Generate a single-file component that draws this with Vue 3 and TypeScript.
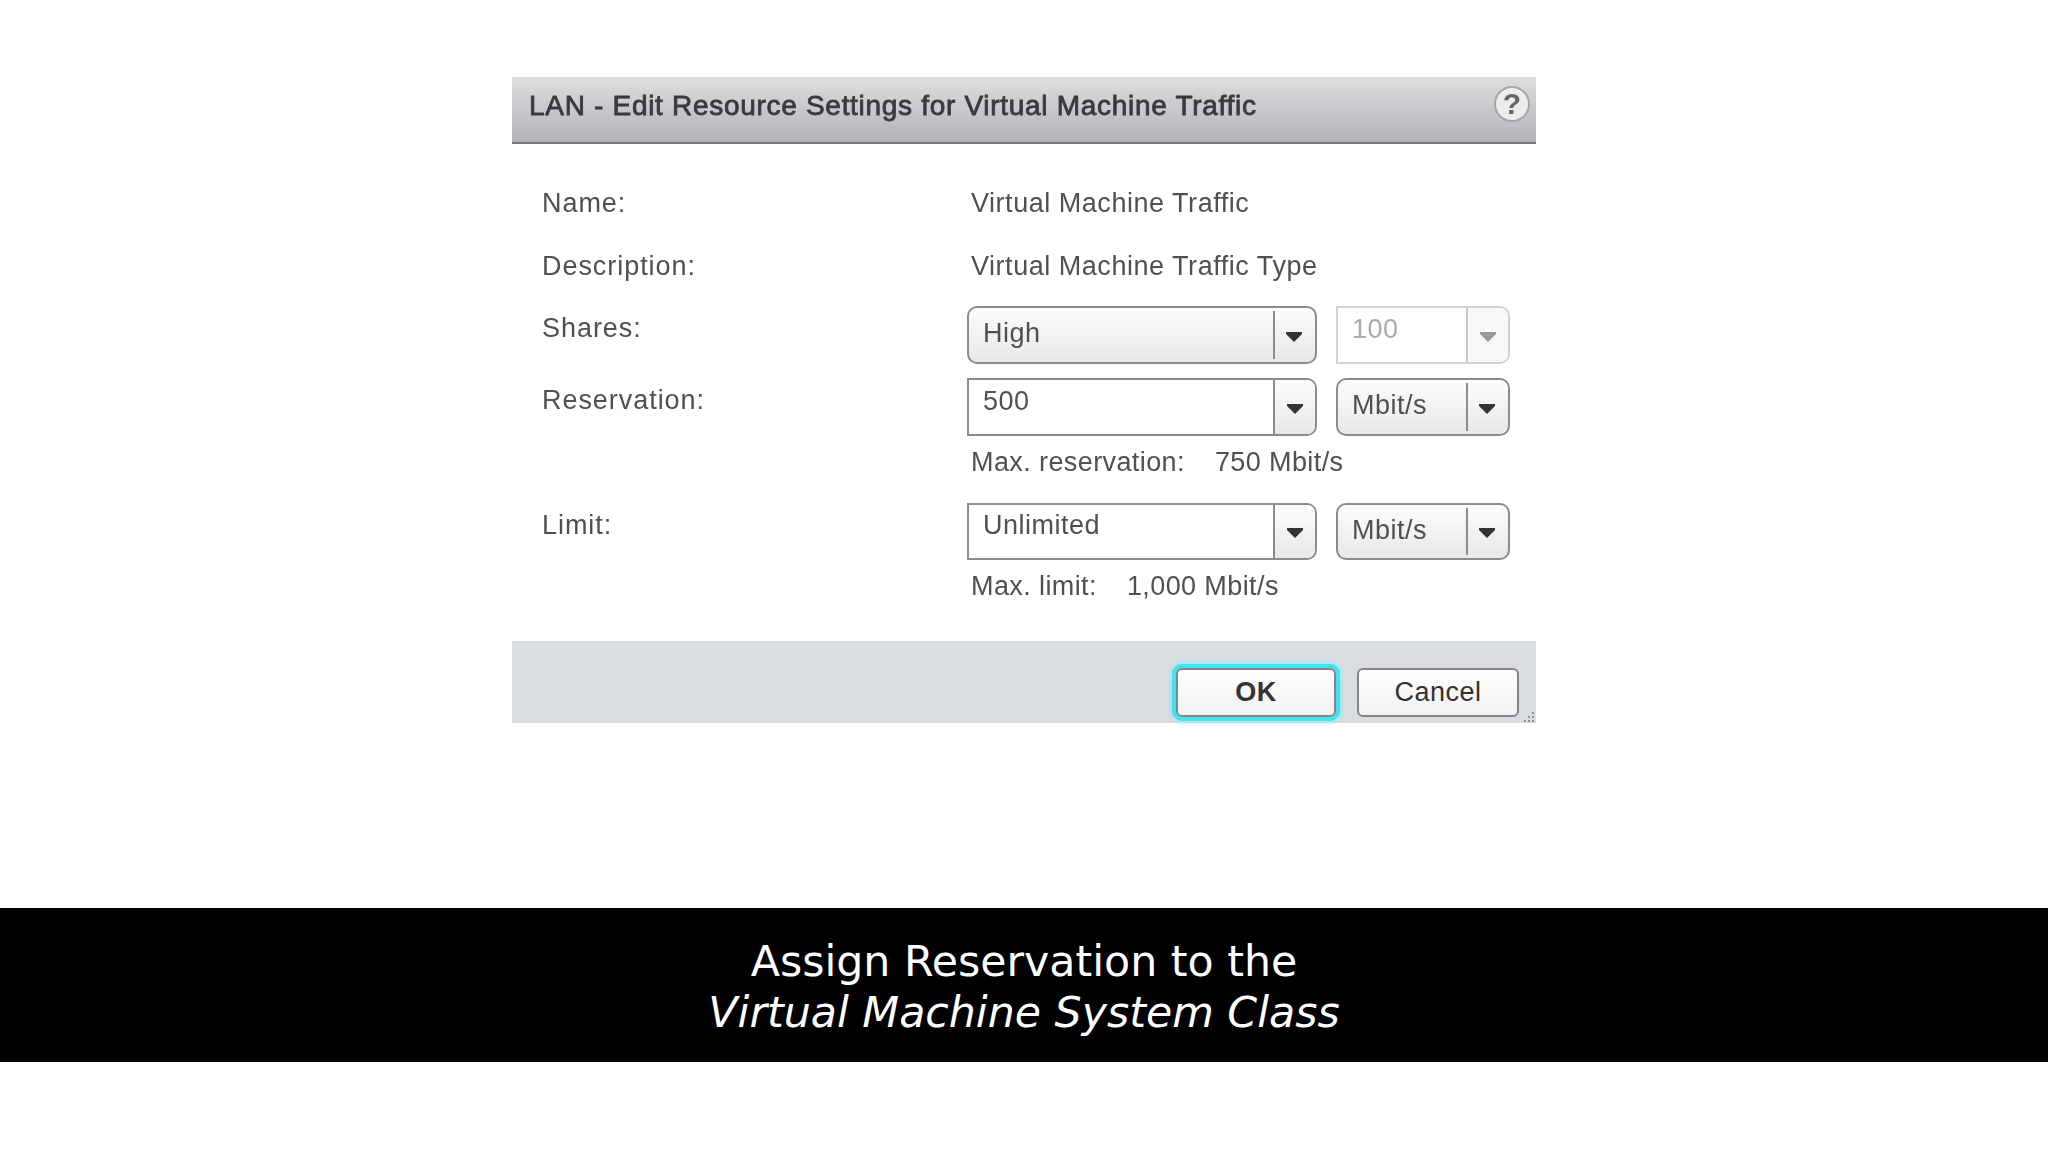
<script setup lang="ts">
interface Combo { text: string; kind: 'closed' | 'edit' | 'disabled'; wide: boolean }
const rows: { label: string; main: Combo; unit: Combo; hint?: [string, string] }[] = [
  { label: 'Shares:', main: { text: 'High', kind: 'closed', wide: true }, unit: { text: '100', kind: 'disabled', wide: false } },
  { label: 'Reservation:', main: { text: '500', kind: 'edit', wide: true }, unit: { text: 'Mbit/s', kind: 'closed', wide: false }, hint: ['Max. reservation:', '750 Mbit/s'] },
  { label: 'Limit:', main: { text: 'Unlimited', kind: 'edit', wide: true }, unit: { text: 'Mbit/s', kind: 'closed', wide: false }, hint: ['Max. limit:', '1,000 Mbit/s'] },
]
</script>

<template>
  <div class="page">
    <section class="dialog">
      <header class="head">
        <h1 class="title">LAN - Edit Resource Settings for Virtual Machine Traffic</h1>
        <span class="help">?</span>
      </header>
      <div class="body">
        <div class="info"><span class="label">Name:</span><span class="value">Virtual Machine Traffic</span></div>
        <div class="info"><span class="label">Description:</span><span class="value">Virtual Machine Traffic Type</span></div>
        <div v-for="r in rows" :key="r.label" class="row">
          <span class="label top">{{ r.label }}</span>
          <div class="fields">
            <div class="combos">
              <div v-for="c in [r.main, r.unit]" :key="c.text" class="combo" :class="[c.kind, c.wide ? 'wide' : 'narrow']">
                <span class="text">{{ c.text }}</span>
                <span class="btn">
                  <svg width="16" height="10" viewBox="0 0 16 10"><path d="M0 0H16V2L8 10L0 2Z" /></svg>
                </span>
              </div>
            </div>
            <div v-if="r.hint" class="hint"><span class="hint-key">{{ r.hint[0] }}</span><span>{{ r.hint[1] }}</span></div>
          </div>
        </div>
      </div>
      <footer class="foot">
        <button class="action ok">OK</button>
        <button class="action cancel">Cancel</button>
        <svg class="grip" width="12" height="12" viewBox="0 0 12 12">
          <g fill="#8a8f96"><rect x="9" y="1" width="2" height="2" /><rect x="5" y="5" width="2" height="2" /><rect x="9" y="5" width="2" height="2" /><rect x="1" y="9" width="2" height="2" /><rect x="5" y="9" width="2" height="2" /><rect x="9" y="9" width="2" height="2" /></g>
        </svg>
      </footer>
    </section>
    <div class="caption">
      <div>Assign Reservation to the</div>
      <div class="em">Virtual Machine System Class</div>
    </div>
  </div>
</template>

<style>
html, body { background: #fff; }
</style>

<style scoped>
.page {
  width: 2048px;
  height: 1152px;
  padding-top: 77px;
  box-sizing: border-box;
  background: #fff;
  overflow: hidden;
  font-family: "Liberation Sans", Arial, sans-serif;
}
.dialog {
  position: relative;
  width: 1024px;
  height: 646px;
  margin-left: 512px;
  display: flex;
  flex-direction: column;
  filter: blur(0.5px);
}
.head {
  height: 67px;
  box-sizing: border-box;
  flex: none;
  display: flex;
  align-items: center;
  justify-content: space-between;
  padding: 0 6px 8px 17px;
  background: linear-gradient(#dedee0, #b2b2b8);
  border-bottom: 2px solid #77777b;
}
.title {
  margin: 0;
  font-size: 28px;
  font-weight: 400;
  letter-spacing: 0.7px;
  -webkit-text-stroke: 0.8px #3a3a3c;
  color: #3a3a3c;
  line-height: 32px;
}
.help {
  width: 36px;
  height: 36px;
  box-sizing: border-box;
  border: 2px solid #a6a6aa;
  border-radius: 50%;
  background: radial-gradient(circle, #ececec 55%, #fafafa 100%);
  color: #666;
  font-size: 30px;
  font-weight: 700;
  line-height: 32px;
  text-align: center;
  margin-bottom: 3px;
}
.body {
  flex: 1;
  padding: 27px 0 0 30px;
  color: #505050;
  font-size: 27px;
  line-height: 32px;
}
.info {
  height: 63px;
  display: grid;
  grid-template-columns: 429px 1fr;
  align-items: center;
}
.row {
  display: grid;
  grid-template-columns: 425px 1fr;
}
.info + .row { margin-top: 9px; }
.row + .row { margin-top: 14px; }
.row:last-child { margin-top: 25px; }
.label { letter-spacing: 0.95px; }
.value { letter-spacing: 0.53px; }
.top { margin-top: 6px; }
.combos {
  display: flex;
  gap: 19px;
}
.combo {
  height: 58px;
  box-sizing: border-box;
  display: flex;
  border: 2px solid #8c8c8c;
  border-radius: 10px;
  overflow: hidden;
}
.row:last-child .combo { height: 57px; }
.wide { width: 350px; }
.narrow { width: 174px; }
.text {
  flex: 1;
  padding: 9px 0 0 14px;
  letter-spacing: 0.5px;
}
.btn {
  width: 42px;
  flex: none;
  position: relative;
  display: flex;
  align-items: center;
  justify-content: center;
  box-sizing: border-box;
}
.btn svg { fill: #333; margin-top: 3px; }
.closed {
  background: linear-gradient(#fdfdfd, #e8e8e8);
}
.closed .btn::before {
  content: "";
  position: absolute;
  left: 0;
  top: 3px;
  bottom: 3px;
  width: 2px;
  background: #8c8c8c;
}
.edit {
  border-radius: 0 10px 10px 0;
  background: #fff;
}
.edit .text { padding-top: 5px; }
.row:last-child .edit .text { padding-top: 4px; }
.edit .btn {
  border-left: 2px solid #8c8c8c;
  background: linear-gradient(#fdfdfd, #e8e8e8);
}
.disabled {
  border-color: #d2d2d2;
  border-radius: 0 10px 10px 0;
  background: #fff;
  color: #ababab;
}
.disabled .text { padding-top: 5px; }
.disabled .btn {
  border-left: 2px solid #c8c8c8;
  background: #f8f8f8;
}
.disabled .btn svg { fill: #999; }
.hint {
  margin: 10px 0 0 4px;
  letter-spacing: 0.4px;
}
.hint-key { margin-right: 30px; }
.foot {
  position: relative;
  height: 82px;
  flex: none;
  box-sizing: border-box;
  padding: 27px 17px 0 0;
  display: flex;
  justify-content: flex-end;
  gap: 21px;
  background: #d9dde2;
}
.action {
  height: 49px;
  padding: 0;
  font-family: inherit;
  font-size: 27px;
  color: #333;
  border: 2px solid #858585;
  border-radius: 6px;
  background: linear-gradient(#fff, #f1f1f1);
  letter-spacing: 0.5px;
}
.ok {
  width: 160px;
  font-weight: 700;
  box-shadow: 0 0 0 4px #43e2ee, 0 0 5px 5px #86edf5;
}
.cancel { width: 162px; }
.grip {
  position: absolute;
  right: 1px;
  bottom: 0;
}
.caption {
  height: 154px;
  margin-top: 185px;
  box-sizing: border-box;
  padding-top: 28px;
  background: #000;
  color: #fff;
  text-align: center;
  font-family: "DejaVu Sans", sans-serif;
  font-size: 42.7px;
  line-height: 51px;
}
.em { font-style: italic; }
</style>
